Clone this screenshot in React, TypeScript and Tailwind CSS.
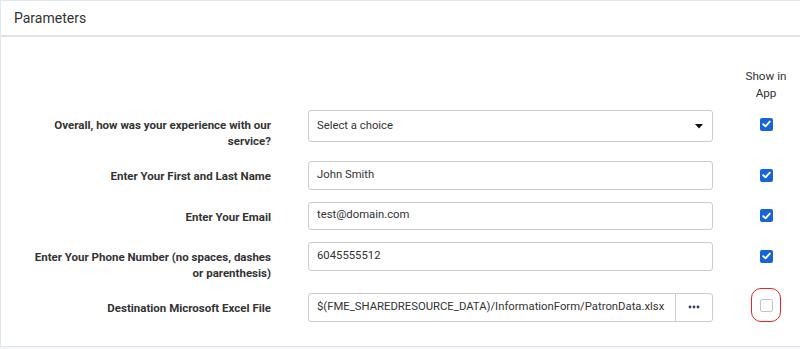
import React from "react";

const font = { fontFamily: "Roboto, 'Liberation Sans', sans-serif" };

function Check({ checked }: { checked: boolean }) {
  if (checked) {
    return (
      <span className="flex h-[13px] w-[13px] items-center justify-center rounded-[2px] bg-[#1664d8]">
        <svg width="9" height="8" viewBox="0 0 9 8">
          <path d="M1.2 4.2 L3.5 6.3 L7.8 1.6" stroke="white" strokeWidth="1.9" fill="none" strokeLinecap="round" strokeLinejoin="round" />
        </svg>
      </span>
    );
  }
  return <span className="block h-[13px] w-[13px] rounded-[2px] border border-[#c4c4c4] bg-white" />;
}

function Row({
  label,
  children,
  checked,
  highlight,
}: {
  label: string;
  children: React.ReactNode;
  checked: boolean;
  highlight?: boolean;
}) {
  return (
    <div className="mb-[12px] flex items-start">
      <div className="w-[240px] pt-[7px] text-right text-[11.5px] font-bold leading-[16px] text-[#333]">{label}</div>
      <div className="ml-[37px] w-[405px]">{children}</div>
      <div className="ml-[28px] flex w-[50px] justify-center">
        {highlight ? (
          <div className="-mt-[5px] flex h-[34px] w-[30px] items-center justify-center rounded-[10px] border-[1.5px] border-[#e0262b]">
            <Check checked={checked} />
          </div>
        ) : (
          <div className="flex h-[28px] items-center">
            <Check checked={checked} />
          </div>
        )}
      </div>
    </div>
  );
}

function TextBox({ value }: { value: string }) {
  return (
    <div className="flex h-[28.5px] items-center rounded-[3px] border border-[#cccccc] bg-white px-[8px] text-[11.3px] text-[#333]">
      {value}
    </div>
  );
}

export default function App() {
  return (
    <div style={font} className="h-[349px] w-[800px] overflow-hidden bg-[#f4f6f9]">
      <div className="border-t border-l border-b border-t-[#e3e8ee] border-l-[#e3e8ee] border-b-[#e3e8ee] bg-white">
        <div className="flex h-[36px] items-center border-b-2 border-[#e1e1e1] pl-[13px] text-[14px] text-[#333]">
          Parameters
        </div>
        <div className="pt-[31px] pb-[12px] pl-[30px]">
          <div className="mb-[8px] flex">
            <div className="w-[240px]" />
            <div className="ml-[37px] w-[405px]" />
            <div className="ml-[28px] w-[50px] text-center text-[11.7px] leading-[17px] text-[#333]">Show in App</div>
          </div>
          <Row label="Overall, how was your experience with our service?" checked>
            <div className="flex h-[32px] items-center justify-between rounded-[3px] border border-[#cccccc] bg-white pl-[8px] pr-[9px] text-[11.3px] text-[#333]">
              <span>Select a choice</span>
              <svg width="8" height="5" viewBox="0 0 8 5">
                <path d="M0 0 H8 L4 4.5 Z" fill="#111" />
              </svg>
            </div>
          </Row>
          <Row label="Enter Your First and Last Name" checked>
            <TextBox value="John Smith" />
          </Row>
          <Row label="Enter Your Email" checked>
            <TextBox value="test@domain.com" />
          </Row>
          <Row label="Enter Your Phone Number (no spaces, dashes or parenthesis)" checked>
            <TextBox value="6045555512" />
          </Row>
          <Row label="Destination Microsoft Excel File" checked={false} highlight>
            <div className="flex h-[28.5px] rounded-[3px] border border-[#cccccc] bg-white text-[11.3px] text-[#333]">
              <div className="flex flex-1 items-center overflow-hidden whitespace-nowrap px-[8px]">
                $(FME_SHAREDRESOURCE_DATA)/InformationForm/PatronData.xlsx
              </div>
              <div className="flex w-[37px] items-center justify-center border-l border-[#cccccc]">
                <svg width="12" height="4" viewBox="0 0 12 4">
                  <circle cx="2" cy="2" r="1.4" fill="#2c3e66" />
                  <circle cx="6" cy="2" r="1.4" fill="#2c3e66" />
                  <circle cx="10" cy="2" r="1.4" fill="#2c3e66" />
                </svg>
              </div>
            </div>
          </Row>
        </div>
      </div>
    </div>
  );
}
